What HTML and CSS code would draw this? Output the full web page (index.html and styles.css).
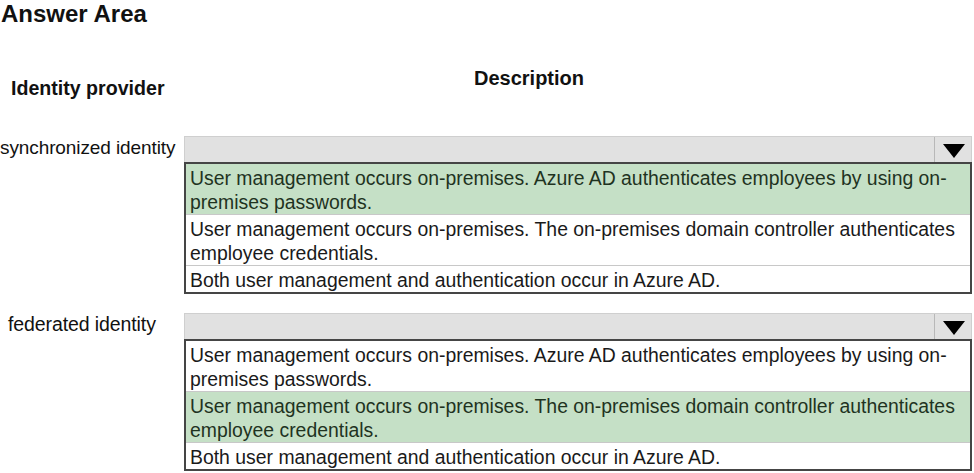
FILE: index.html
```html
<!DOCTYPE html>
<html lang="en">
<head>
    <meta charset="UTF-8">
    <title>Answer Area</title>
    <link rel="stylesheet" href="styles.css">
</head>
<body>
<div class="area">
    <h1>Answer Area</h1>

    <div class="heads">
        <div class="head-left">Identity provider</div>
        <div class="head-right">Description</div>
    </div>

    <div class="question q1">
        <div class="label">synchronized identity</div>
        <div class="dropdown">
            <div class="bar">
                <span class="arrow"></span>
            </div>
            <div class="list">
                <div class="option picked">User management occurs on-premises. Azure AD authenticates employees by using on-premises passwords.</div>
                <div class="option">User management occurs on-premises. The on-premises domain controller authenticates employee credentials.</div>
                <div class="option">Both user management and authentication occur in Azure AD.</div>
            </div>
        </div>
    </div>

    <div class="question q2">
        <div class="label">federated identity</div>
        <div class="dropdown">
            <div class="bar">
                <span class="arrow"></span>
            </div>
            <div class="list">
                <div class="option">User management occurs on-premises. Azure AD authenticates employees by using on-premises passwords.</div>
                <div class="option picked">User management occurs on-premises. The on-premises domain controller authenticates employee credentials.</div>
                <div class="option">Both user management and authentication occur in Azure AD.</div>
            </div>
        </div>
    </div>
</div>
</body>
</html>
```

FILE: styles.css
```css
body { margin: 0; background: #fff; font-family: "Liberation Sans", Arial, sans-serif; color: #111; }
.area { width: 974px; height: 473px; overflow: hidden; }
h1 { margin: 0; padding: 0 0 0 1px; font-size: 24px; line-height: 27px; font-weight: bold; }
.heads { display: flex; height: 54px; margin-top: 41px; }
.head-left { width: 184px; padding: 9px 0 0 11px; box-sizing: border-box; font-size: 19.6px; font-weight: bold; }
.head-right { flex: 1; text-align: center; font-size: 20px; font-weight: bold; padding-right: 100px; margin-top: -1px; }
.question { display: flex; }
.q1 { margin-top: 14px; }
.q2 { margin-top: 19px; }
.label { width: 184px; font-size: 19px; line-height: 22px; padding-top: 1px; letter-spacing: -0.1px; }
.q2 .label { padding-left: 8px; padding-top: 0; box-sizing: border-box; font-size: 19.5px; }
.dropdown { width: 788px; }
.bar { height: 25px; background: #e1e1e1; border: 1px solid #cfcfcf; border-bottom: none; position: relative; }
.arrow { position: absolute; right: 0; top: 0; width: 36px; height: 25px; border-left: 1px solid #b8b8b8; }
.arrow::after { content: ""; position: absolute; left: 8px; top: 7px; border-left: 11px solid transparent; border-right: 11px solid transparent; border-top: 14px solid #000; }
.list { border: 2px solid #454545; }
.option { font-size: 19.4px; line-height: 24px; padding: 2px 8px 0 4px; border-top: 1px solid #c8c8c8; color: #1a1a1a; }
.option:first-child { border-top: none; }
.option.picked { background: #c5e0c6; color: #1f331f; }
```
